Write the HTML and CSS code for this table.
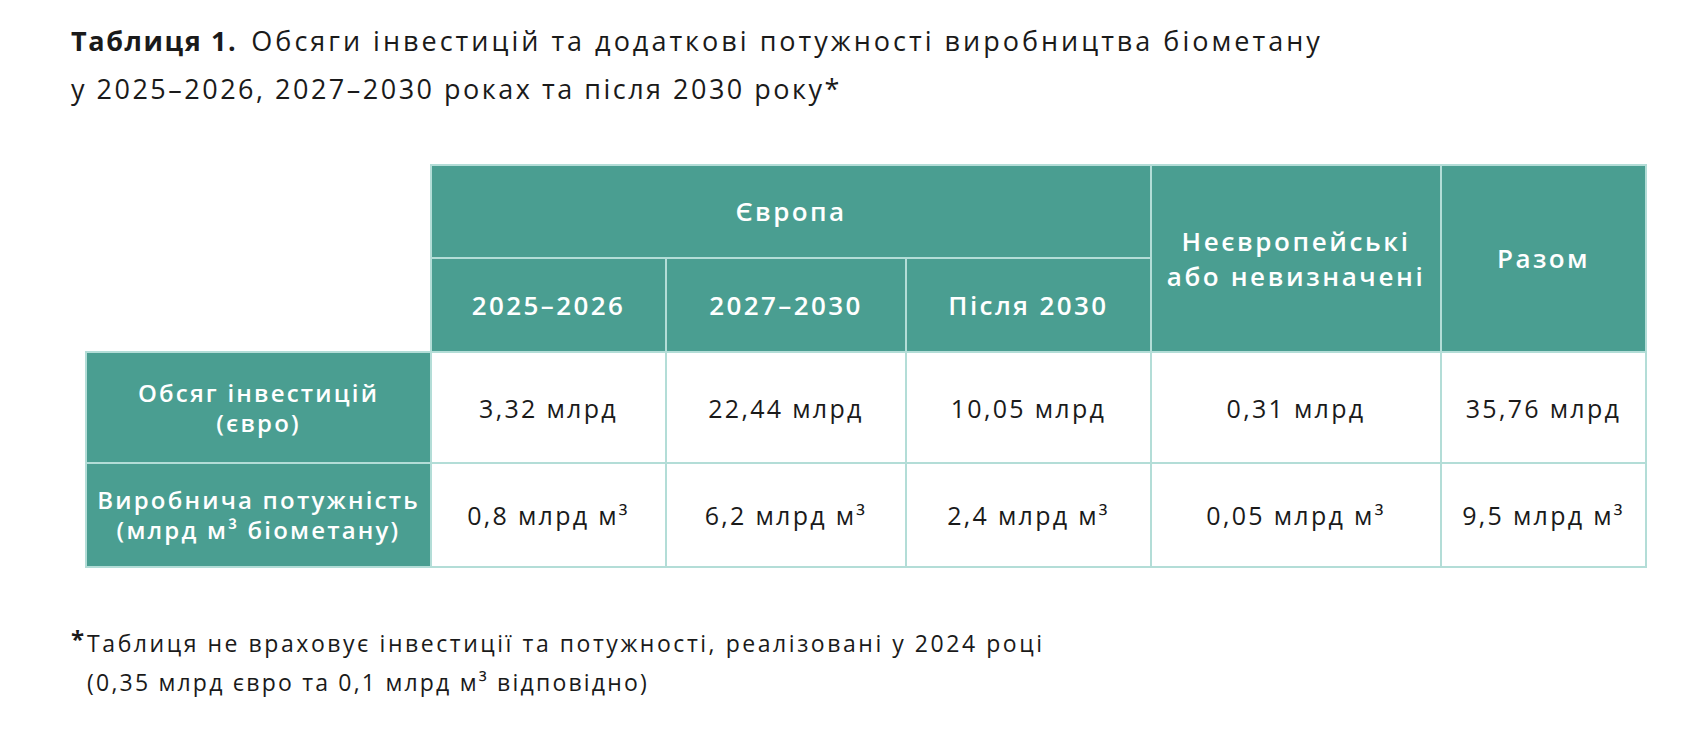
FILE: index.html
```html
<!DOCTYPE html>
<html lang="uk">
<head>
<meta charset="utf-8">
<link rel="stylesheet" href="styles.css">
</head>
<body>
<div class="page">
  <h1 class="title">
    <span class="title-line first"><span class="title-label">Таблиця 1.</span> Обсяги інвестицій та додаткові потужності виробництва біометану</span>
    <span class="title-line">у 2025–2026, 2027–2030 роках та після 2030 року*</span>
  </h1>

  <table class="data">
    <colgroup>
      <col class="c-label"><col class="c1"><col class="c2"><col class="c3"><col class="c4"><col class="c5">
    </colgroup>
    <thead>
      <tr class="r-head1">
        <td class="empty" rowspan="2"></td>
        <th colspan="3">Європа</th>
        <th rowspan="2" class="multi">Неєвропейські<br>або невизначені</th>
        <th rowspan="2">Разом</th>
      </tr>
      <tr class="r-head2">
        <th>2025–2026</th>
        <th>2027–2030</th>
        <th>Після 2030</th>
      </tr>
    </thead>
    <tbody>
      <tr class="r-inv">
        <th class="row-label">Обсяг інвестицій<br>(євро)</th>
        <td>3,32 млрд</td>
        <td>22,44 млрд</td>
        <td>10,05 млрд</td>
        <td>0,31 млрд</td>
        <td>35,76 млрд</td>
      </tr>
      <tr class="r-cap">
        <th class="row-label">Виробнича потужність<br>(млрд м³ біометану)</th>
        <td>0,8 млрд м³</td>
        <td>6,2 млрд м³</td>
        <td>2,4 млрд м³</td>
        <td>0,05 млрд м³</td>
        <td>9,5 млрд м³</td>
      </tr>
    </tbody>
  </table>

  <div class="note">
    <span class="star">*</span>
    <p class="note-text"><span class="note-line first">Таблиця не враховує інвестиції та потужності, реалізовані у 2024 році</span><span class="note-line">(0,35 млрд євро та 0,1 млрд м³ відповідно)</span></p>
  </div>
</div>
</body>
</html>
```

FILE: styles.css
```css
html, body {
  margin: 0;
  padding: 0;
  background: #ffffff;
}

.page {
  padding: 17px 0 0 71px;
  font-family: "Open Sans", "Liberation Sans", sans-serif;
  color: #1a1a1a;
}

.title {
  margin: 0;
  font-size: 27px;
  font-weight: 400;
  line-height: 48px;
  letter-spacing: 2.5px;
}

.title-line {
  display: block;
}

.title-line.first {
  letter-spacing: 3px;
}

.title-label {
  font-weight: 700;
  letter-spacing: 1.6px;
  margin-right: 4px;
}

.data {
  margin: 51px 0 0 14px;
  border-collapse: collapse;
  table-layout: fixed;
  width: 1560px;
}

.c-label { width: 345px; }
.c1 { width: 235px; }
.c2 { width: 240px; }
.c3 { width: 245px; }
.c4 { width: 290px; }
.c5 { width: 205px; }

.data th,
.data td {
  border: 2px solid #b3ddd7;
  text-align: center;
  vertical-align: middle;
  padding: 0 4px;
}

.data th {
  background: #4a9e91;
  color: #ffffff;
  font-weight: 600;
  font-size: 26px;
  line-height: 35px;
  letter-spacing: 2.4px;
}

.data th.multi {
  letter-spacing: 2.6px;
}

.data td {
  color: #1a1a1a;
  font-weight: 400;
  font-size: 25px;
  line-height: 32px;
  letter-spacing: 2.3px;
}

.data td.empty {
  border: none;
  background: transparent;
}

.r-head1 { height: 93px; }
.r-head2 { height: 94px; }
.r-inv { height: 111px; }
.r-cap { height: 104px; }

.data th.row-label {
  font-size: 24px;
  line-height: 30px;
  letter-spacing: 2.2px;
  padding: 0 2px;
}

.note {
  margin-top: 56px;
  display: flex;
  align-items: flex-start;
  font-size: 23px;
  line-height: 39px;
  letter-spacing: 2.2px;
}

.star {
  font-weight: 700;
  font-size: 24px;
  line-height: 30px;
  margin-right: 3px;
  letter-spacing: 0;
}

.note-text {
  margin: 0;
}

.note-line {
  display: block;
}

.note-line.first {
  letter-spacing: 2.55px;
}
```
